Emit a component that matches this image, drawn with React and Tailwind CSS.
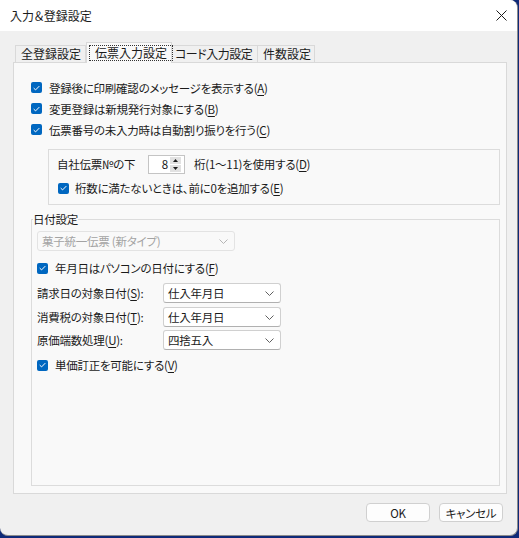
import React from 'react';

const Check = () => (
    <span className="flex h-[11px] w-[11px] shrink-0 items-center justify-center rounded-[2px] bg-[#0067c0]">
        <svg width="7" height="6" viewBox="0 0 7 6">
            <path d="M0.7 3.1 L2.6 4.9 L6.3 1.1" fill="none" stroke="#ffffff" strokeWidth="1" />
        </svg>
    </span>
);

const Key = ({ k }) => (
    <>
        (<span className="underline underline-offset-2">{k}</span>)
    </>
);

const Chevron = ({ color }) => (
    <svg width="9" height="5" viewBox="0 0 9 5">
        <path d="M0.5 0.5 L4.5 4.5 L8.5 0.5" fill="none" stroke={color} strokeWidth="1" />
    </svg>
);

const Combo = ({ value, className, disabled }) => (
    <div
        className={
            'flex h-[20px] items-center justify-between rounded-[3px] border pl-[4px] pr-[6px] ' +
            (disabled
                ? 'border-[#e3e3e3] bg-[#f9f9f9] text-[#a3a3a3] '
                : 'border-[#d0d0d0] border-b-[#b0b0b0] bg-white text-[#1b1b1b] ') +
            className
        }
    >
        <span>{value}</span>
        <Chevron color={disabled ? '#b5b5b5' : '#606060'} />
    </div>
);

const App = () => {
    return (
        <div className="h-[538px] w-[519px] whitespace-nowrap bg-[#0f2a78] font-['Noto_Sans_CJK_JP',sans-serif] text-[11.5px] leading-[16px] tracking-[-0.25px] text-[#1b1b1b] [font-feature-settings:'palt']">
            <div className="flex h-[536px] w-[518px] flex-col overflow-hidden rounded-tr-[8px] rounded-b-[8px] border-r border-b border-[#8c8c8c] bg-[#f0f0f0]">
                {/* title bar */}
                <div className="flex h-[31px] shrink-0 items-center justify-between bg-white pl-[10px] pr-[10px]">
                    <span className="text-[12px] tracking-normal">入力＆登録設定</span>
                    <svg width="11" height="11" viewBox="0 0 11 11">
                        <path d="M0.5 0.5 L10.5 10.5 M10.5 0.5 L0.5 10.5" stroke="#1b1b1b" strokeWidth="1" />
                    </svg>
                </div>

                <div className="flex flex-col pl-[13px] pt-[11px]">
                    {/* tabs */}
                    <div className="flex h-[20px] items-end pl-[2px] text-[12px] tracking-normal">
                        <div className="flex h-[17px] w-[71px] items-center border border-b-0 border-[#d9d9d9] pl-[5px]">全登録設定</div>
                        <div className="relative z-10 -mb-px flex h-[21px] w-[86px] items-center border border-b-0 border-[#d9d9d9] bg-[#f9f9f9] pl-[2px]">
                            <span className="border border-dotted border-[#333] px-[5px] leading-[14px]">伝票入力設定</span>
                        </div>
                        <div className="flex h-[17px] w-[86px] items-center border border-l-0 border-b-0 border-[#d9d9d9] pl-[3px] tracking-[-0.5px]">コード入力設定</div>
                        <div className="flex h-[17px] w-[57px] items-center border border-l-0 border-b-0 border-[#d9d9d9] pl-[5px]">件数設定</div>
                    </div>

                    {/* tab panel */}
                    <div className="flex h-[432px] w-[494px] flex-col border border-[#d9d9d9] bg-[#f9f9f9] pt-[14px]">
                        <div className="flex h-[21px] items-center gap-[7px] pl-[17px]">
                            <Check />
                            <span>登録後に印刷確認のメッセージを表示する<Key k="A" /></span>
                        </div>
                        <div className="flex h-[21px] items-center gap-[7px] pl-[17px]">
                            <Check />
                            <span>変更登録は新規発行対象にする<Key k="B" /></span>
                        </div>
                        <div className="flex h-[21px] items-center gap-[7px] pl-[17px]">
                            <Check />
                            <span>伝票番号の未入力時は自動割り振りを行う<Key k="C" /></span>
                        </div>

                        {/* digits box */}
                        <div className="ml-[34px] mr-[6px] mt-[9px] flex h-[56px] flex-col border border-[#dcdcdc] pt-[3px]">
                            <div className="flex h-[22px] items-center pl-[8px]">
                                <span className="w-[91px]">自社伝票№の下</span>
                                <div className="flex h-[19px] w-[37px] items-center border border-[#c4c4c4] bg-white pr-[3px]">
                                    <span className="flex-1 pr-[2px] text-right">8</span>
                                    <div className="flex h-[15px] w-[11px] flex-col gap-px">
                                        <div className="flex flex-1 items-center justify-center bg-[#e1e1e1]">
                                            <svg width="5" height="3" viewBox="0 0 5 3"><path d="M0 3 L2.5 0 L5 3 Z" fill="#1b1b1b" /></svg>
                                        </div>
                                        <div className="flex flex-1 items-center justify-center bg-[#e1e1e1]">
                                            <svg width="5" height="3" viewBox="0 0 5 3"><path d="M0 0 L2.5 3 L5 0 Z" fill="#1b1b1b" /></svg>
                                        </div>
                                    </div>
                                </div>
                                <span className="ml-[9px]">桁(1～11)を使用する<Key k="D" /></span>
                            </div>
                            <div className="mt-[2px] flex h-[22px] items-center gap-[6px] pl-[9px]">
                                <Check />
                                <span>桁数に満たないときは、前に0を追加する<Key k="E" /></span>
                            </div>
                        </div>

                        {/* date settings */}
                        <fieldset className="ml-[17px] mr-[6px] mt-[6px] h-[275px] border border-[#dcdcdc] pl-[5px]">
                            <legend className="-ml-[4px] px-0">日付設定</legend>
                            <Combo value="菓子統一伝票 (新タイプ)" className="mt-[4px] w-[198px]" disabled />
                            <div className="mt-[6px] flex h-[22px] items-center gap-[7px]">
                                <Check />
                                <span>年月日はパソコンの日付にする<Key k="F" /></span>
                            </div>
                            <div className="mt-[4px] flex items-center">
                                <span className="w-[126px]">請求日の対象日付<Key k="S" />:</span>
                                <Combo value="仕入年月日" className="w-[118px]" />
                            </div>
                            <div className="mt-[4px] flex items-center">
                                <span className="w-[126px]">消費税の対象日付<Key k="T" />:</span>
                                <Combo value="仕入年月日" className="w-[118px]" />
                            </div>
                            <div className="mt-[3px] flex items-center">
                                <span className="w-[126px]">原価端数処理<Key k="U" />:</span>
                                <Combo value="四捨五入" className="w-[118px]" />
                            </div>
                            <div className="mt-[4px] flex h-[22px] items-center gap-[7px]">
                                <Check />
                                <span>単価訂正を可能にする<Key k="V" /></span>
                            </div>
                        </fieldset>
                    </div>

                    {/* buttons */}
                    <div className="mt-[9px] flex justify-end gap-[9px] pr-[14px]">
                        <button className="flex h-[19px] w-[64px] items-center justify-center rounded-[4px] border border-[#d0d0d0] bg-[#fdfdfd]">OK</button>
                        <button className="flex h-[19px] w-[64px] items-center justify-center rounded-[4px] border border-[#d0d0d0] bg-[#fdfdfd]">キャンセル</button>
                    </div>
                </div>
            </div>
        </div>
    );
};

export default App;
